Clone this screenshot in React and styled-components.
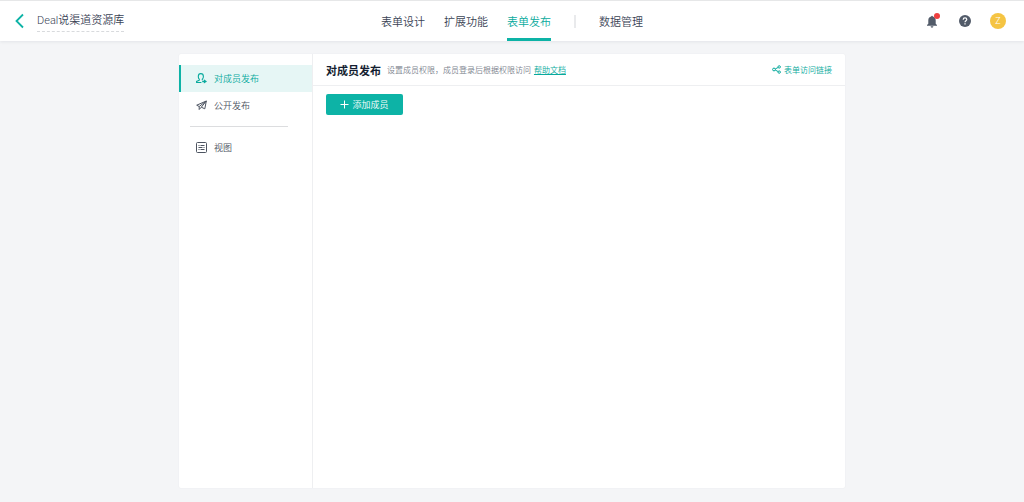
import React from 'react';
import styled, { createGlobalStyle, css } from 'styled-components';

const colors = {
    primary: '#0db3a6',
    primaryText: '#08aa9d',
    primaryFade: '#e6f6f5',
    text: '#3a4355',
    title: '#141e31',
    muted: '#7c838e',
    line: '#eeeff1',
    page: '#f4f5f7',
    icon: '#525b69',
};

const GlobalStyle = createGlobalStyle`
    * {
        box-sizing: border-box;
    }

    body {
        margin: 0;
        background: ${colors.page};
        color: ${colors.text};
        font-family: Roboto, "Noto Sans CJK SC", sans-serif;
        font-size: 11px;
        font-weight: 350;
    }

    button {
        border: 0;
        padding: 0;
        background: none;
        color: inherit;
        font: inherit;
        cursor: pointer;
    }

    svg {
        display: block;
        flex: none;
    }
`;

const Page = styled.div`
    display: flex;
    flex-direction: column;
    min-height: 100vh;
`;

const Header = styled.header`
    display: grid;
    grid-template-columns: 1fr auto 1fr;
    align-items: stretch;
    height: 41px;
    padding: 0 14px;
    border-top: 1px solid #e6e7e8;
    background: #fff;
    box-shadow: 0 1px 3px rgba(30, 40, 60, 0.08);
`;

const HeaderLeft = styled.div`
    display: flex;
    align-items: center;
    gap: 12px;
`;

const FormName = styled.span`
    border-bottom: 1px dashed #d8dadd;
    line-height: 20px;
`;

const Nav = styled.nav`
    display: flex;
    align-items: stretch;
    gap: 19px;
`;

const NavLink = styled.a`
    display: flex;
    align-items: center;
    padding-top: 3px;
    border-bottom: 3px solid transparent;
    color: inherit;
    text-decoration: none;

    ${({ $active }) => $active && css`
        border-color: ${colors.primary};
        color: ${colors.primaryText};
    `}
`;

const NavSeparator = styled.span`
    align-self: center;
    width: 2px;
    height: 13px;
    margin: 0 4px;
    background: #e9eaec;
`;

const HeaderRight = styled.div`
    display: flex;
    align-items: center;
    justify-content: flex-end;
    gap: 19px;
    padding-right: 4px;
`;

const BellButton = styled.button`
    position: relative;
    margin-right: 3px;
`;

const BellDot = styled.span`
    position: absolute;
    top: -2px;
    right: -3px;
    width: 6px;
    height: 6px;
    border-radius: 50%;
    background: #ee3f3f;
`;

const Avatar = styled.button`
    width: 16px;
    height: 16px;
    border-radius: 50%;
    background: #f5c443;
    color: #fff;
    font-size: 9px;
    line-height: 16px;
    text-align: center;
`;

const Panel = styled.div`
    display: flex;
    flex: 1;
    width: calc(100% - 32px);
    max-width: 666px;
    margin: 13px auto 14px;
    border-radius: 2px;
    background: #fff;
    box-shadow: 0 0 2px rgba(30, 40, 60, 0.06);
`;

const Sidebar = styled.aside`
    flex: none;
    width: 134px;
    padding-top: 11px;
    border-right: 1px solid ${colors.line};
`;

const SideLink = styled.a`
    display: flex;
    align-items: center;
    gap: 7px;
    height: 27px;
    padding-left: 15px;
    border-left: 2px solid transparent;
    color: #4d5461;
    font-size: 9px;
    text-decoration: none;

    ${({ $active }) => $active && css`
        border-color: ${colors.primary};
        background: ${colors.primaryFade};
        color: ${colors.primaryText};
    `}
`;

const SideSeparator = styled.hr`
    height: 1px;
    margin: 7px 24px 7px 11px;
    border: 0;
    background: #dcdddf;
`;

const Content = styled.main`
    flex: 1;
    min-width: 0;
`;

const ContentHeader = styled.div`
    display: flex;
    align-items: center;
    height: 32px;
    padding: 0 13px;
    border-bottom: 1px solid ${colors.line};
`;

const ContentTitle = styled.h1`
    margin: 0 6px 0 0;
    color: ${colors.title};
    font-size: 11px;
    font-weight: 700;
    white-space: nowrap;
`;

const Description = styled.p`
    flex: 1;
    margin: 0;
    color: ${colors.muted};
    font-size: 8px;
`;

const HelpLink = styled.a`
    margin-left: 1px;
    color: ${colors.primaryText};
`;

const ShareLink = styled.a`
    display: flex;
    align-items: center;
    gap: 3px;
    color: ${colors.primaryText};
    font-size: 8px;
    text-decoration: none;
`;

const Toolbar = styled.div`
    padding: 8px 13px;
`;

const AddButton = styled.button`
    display: flex;
    align-items: center;
    justify-content: center;
    gap: 3px;
    width: 77px;
    height: 21px;
    border-radius: 2px;
    background: ${colors.primary};
    color: #fff;
    font-size: 9px;
`;

const BackIcon = () => (
    <svg width="11" height="16" viewBox="0 0 11 16" fill="none" stroke={colors.primary} strokeWidth="1.8">
        <path d="M9 1.5 2.5 8 9 14.5" />
    </svg>
);

const BellIcon = () => (
    <svg width="10" height="13" viewBox="0 0 10 13" fill={colors.icon}>
        <path d="M4.2 1.5a.8.8 0 0 1 1.6 0C7.6 1.9 8.7 3.3 8.7 5.2v3.6L10 10v.7H0V10l1.3-1.2V5.2c0-1.9 1.1-3.3 2.9-3.7ZM3.6 11.3h2.8a1.4 1.4 0 0 1-2.8 0Z" />
    </svg>
);

const HelpIcon = () => (
    <svg width="12" height="12" viewBox="0 0 12 12" fill="none">
        <circle cx="6" cy="6" r="6" fill={colors.icon} />
        <path d="M4.2 4.7C4.2 3.5 5 2.9 6 2.9s1.8.6 1.8 1.6C7.8 5.7 6 5.8 6 7.3" stroke="#fff" strokeWidth="1.2" />
        <path d="M6 8.2v1.3" stroke="#fff" strokeWidth="1.3" />
    </svg>
);

const MemberIcon = () => (
    <svg width="11" height="11" viewBox="0 0 11 11" fill="none" stroke="currentColor" strokeWidth="1.1">
        <path d="M5.4 9.5H.6V8.4l2.7-1.2v-1C2.6 5.6 2.3 4.5 2.3 3.4 2.3 1.7 3.3.6 4.8.6s2.6 1.1 2.6 2.8c0 1.1-.4 2.2-1.1 2.8v1" />
        <path d="M6.2 8.5h2.6" strokeWidth="1.4" />
        <path d="M7.9 6.2 11 8.5 7.9 10.6Z" fill="currentColor" stroke="none" />
    </svg>
);

const PlaneIcon = () => (
    <svg width="11" height="11" viewBox="0 0 11 11" fill="none" stroke="currentColor" strokeWidth="1" strokeLinejoin="round">
        <path d="M10.3 1 .7 5.2l2.5 1.3L10.3 1 8.8 8.8 5.3 7.2 10.3 1M3.2 6.5v3l2.1-2.3" />
    </svg>
);

const ViewIcon = () => (
    <svg width="11" height="11" viewBox="0 0 11 11" fill="none" stroke="currentColor" strokeWidth="1">
        <rect x=".5" y=".5" width="10" height="10" rx="1" />
        <path d="M2.5 3.5h1M4.5 3.5h4M2.5 5.5h4M7.5 5.5h1M2.5 7.5h1M4.5 7.5h4" />
    </svg>
);

const ShareIcon = () => (
    <svg width="9" height="9" viewBox="0 0 9 9" fill="none" stroke="currentColor" strokeWidth="1">
        <circle cx="2" cy="4.5" r="1.4" />
        <circle cx="7.2" cy="1.9" r="1.2" />
        <circle cx="7.2" cy="7.1" r="1.2" />
        <path d="m3.3 3.9 2.8-1.4M3.3 5.1l2.8 1.4" />
    </svg>
);

const PlusIcon = () => (
    <svg width="9" height="9" viewBox="0 0 9 9" stroke="currentColor" strokeWidth="1">
        <path d="M4.5.5v8M.5 4.5h8" />
    </svg>
);

const App = () => (
    <>
        <GlobalStyle />
        <Page>
            <Header>
                <HeaderLeft>
                    <button type="button" aria-label="返回"><BackIcon /></button>
                    <FormName>Deal说渠道资源库</FormName>
                </HeaderLeft>
                <Nav>
                    <NavLink href="#design">表单设计</NavLink>
                    <NavLink href="#extend">扩展功能</NavLink>
                    <NavLink href="#publish" $active>表单发布</NavLink>
                    <NavSeparator />
                    <NavLink href="#data">数据管理</NavLink>
                </Nav>
                <HeaderRight>
                    <BellButton type="button" aria-label="通知">
                        <BellIcon />
                        <BellDot />
                    </BellButton>
                    <button type="button" aria-label="帮助"><HelpIcon /></button>
                    <Avatar type="button">Z</Avatar>
                </HeaderRight>
            </Header>
            <Panel>
                <Sidebar>
                    <SideLink href="#members" $active><MemberIcon />对成员发布</SideLink>
                    <SideLink href="#public"><PlaneIcon />公开发布</SideLink>
                    <SideSeparator />
                    <SideLink href="#view"><ViewIcon />视图</SideLink>
                </Sidebar>
                <Content>
                    <ContentHeader>
                        <ContentTitle>对成员发布</ContentTitle>
                        <Description>
                            设置成员权限，成员登录后根据权限访问
                            {' '}
                            <HelpLink href="#help">帮助文档</HelpLink>
                        </Description>
                        <ShareLink href="#share"><ShareIcon />表单访问链接</ShareLink>
                    </ContentHeader>
                    <Toolbar>
                        <AddButton type="button"><PlusIcon />添加成员</AddButton>
                    </Toolbar>
                </Content>
            </Panel>
        </Page>
    </>
);

export default App;
